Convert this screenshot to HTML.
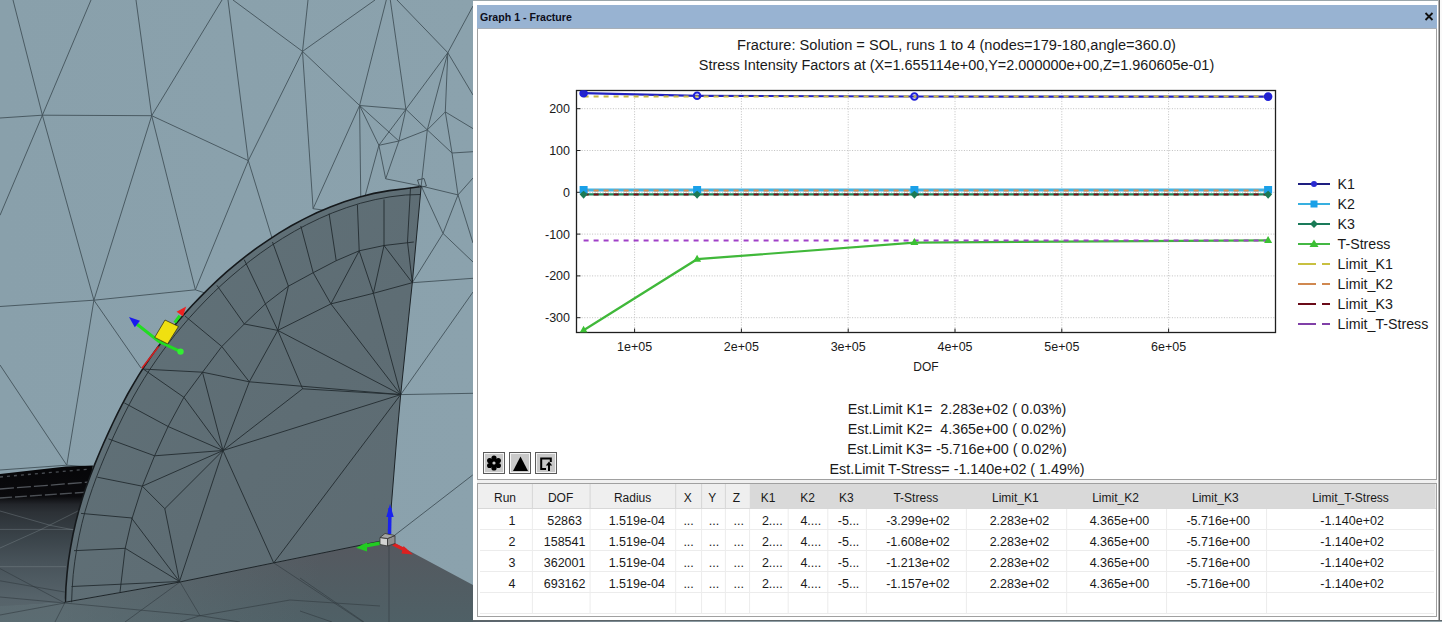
<!DOCTYPE html>
<html><head><meta charset="utf-8">
<style>
html,body{margin:0;padding:0;}
body{width:1442px;height:622px;overflow:hidden;position:relative;background:#8ea3ad;font-family:"Liberation Sans",sans-serif;}
.abs{position:absolute;}
svg{position:absolute;left:0;top:0;}
.t{font-family:"Liberation Sans",sans-serif;fill:#1a1a1a;}
</style></head>
<body>
<svg width="473" height="622" viewBox="0 0 473 622">
<rect x="0" y="0" width="473" height="622" fill="#8ea3ad"/>
<defs>
<linearGradient id="bgg" x1="0" y1="0" x2="1" y2="0"><stop offset="0" stop-color="#89a0ab"/><stop offset="1" stop-color="#8ba2ad"/></linearGradient>
<linearGradient id="flL" x1="0" y1="465" x2="0" y2="622" gradientUnits="userSpaceOnUse">
<stop offset="0" stop-color="#060608"/><stop offset="0.2" stop-color="#0a0a0d"/><stop offset="0.25" stop-color="#22252a"/><stop offset="0.3" stop-color="#2c3136"/><stop offset="0.45" stop-color="#394248"/><stop offset="0.62" stop-color="#48535a"/><stop offset="0.85" stop-color="#56636a"/><stop offset="1" stop-color="#5a676d"/></linearGradient>
<linearGradient id="flR" x1="0" y1="540" x2="0" y2="622" gradientUnits="userSpaceOnUse">
<stop offset="0" stop-color="#56585f"/><stop offset="0.45" stop-color="#525c62"/><stop offset="1" stop-color="#4f6066"/></linearGradient>
<linearGradient id="flR2" x1="60" y1="0" x2="320" y2="0" gradientUnits="userSpaceOnUse">
<stop offset="0" stop-color="#6a7a80" stop-opacity="0.45"/><stop offset="1" stop-color="#6a7a80" stop-opacity="0"/></linearGradient>
<linearGradient id="fan" x1="0" y1="0" x2="1" y2="1"><stop offset="0" stop-color="#617279"/><stop offset="0.6" stop-color="#5e6d74"/><stop offset="1" stop-color="#5d6b72"/></linearGradient>
</defs>
<rect x="0" y="0" width="473" height="622" fill="url(#bgg)"/>
<path d="M13.0 0.0 L42.4 115.2" fill="none" stroke="#43525a" stroke-width="0.9" stroke-opacity="1"/>
<path d="M91.0 0.0 L42.4 115.2" fill="none" stroke="#43525a" stroke-width="0.9" stroke-opacity="1"/>
<path d="M0.0 118.0 L42.4 115.2" fill="none" stroke="#43525a" stroke-width="0.9" stroke-opacity="1"/>
<path d="M42.4 115.2 L151.7 115.7" fill="none" stroke="#43525a" stroke-width="0.9" stroke-opacity="1"/>
<path d="M136.0 0.0 L151.7 115.7" fill="none" stroke="#43525a" stroke-width="0.9" stroke-opacity="1"/>
<path d="M222.0 0.0 L151.7 115.7" fill="none" stroke="#43525a" stroke-width="0.9" stroke-opacity="1"/>
<path d="M228.0 0.0 L248.3 160.6" fill="none" stroke="#43525a" stroke-width="0.9" stroke-opacity="1"/>
<path d="M151.7 115.7 L248.3 160.6" fill="none" stroke="#43525a" stroke-width="0.9" stroke-opacity="1"/>
<path d="M151.7 115.7 L93.9 300.2" fill="none" stroke="#43525a" stroke-width="0.9" stroke-opacity="1"/>
<path d="M42.4 115.2 L93.9 300.2" fill="none" stroke="#43525a" stroke-width="0.9" stroke-opacity="1"/>
<path d="M151.7 115.7 L195.4 289.8" fill="none" stroke="#43525a" stroke-width="0.9" stroke-opacity="1"/>
<path d="M248.3 160.6 L195.4 289.8" fill="none" stroke="#43525a" stroke-width="0.9" stroke-opacity="1"/>
<path d="M42.4 115.2 L0.0 215.3" fill="none" stroke="#43525a" stroke-width="0.9" stroke-opacity="1"/>
<path d="M233.0 0.0 L302.5 51.4" fill="none" stroke="#43525a" stroke-width="0.9" stroke-opacity="1"/>
<path d="M308.0 0.0 L302.5 51.4" fill="none" stroke="#43525a" stroke-width="0.9" stroke-opacity="1"/>
<path d="M375.0 0.0 L302.5 51.4" fill="none" stroke="#43525a" stroke-width="0.9" stroke-opacity="1"/>
<path d="M302.5 51.4 L248.3 160.6" fill="none" stroke="#43525a" stroke-width="0.9" stroke-opacity="1"/>
<path d="M302.5 51.4 L313.1 208.7" fill="none" stroke="#43525a" stroke-width="0.9" stroke-opacity="1"/>
<path d="M302.5 51.4 L359.6 105.5" fill="none" stroke="#43525a" stroke-width="0.9" stroke-opacity="1"/>
<path d="M386.3 0.0 L359.6 105.5" fill="none" stroke="#43525a" stroke-width="0.9" stroke-opacity="1"/>
<path d="M390.3 0.0 L405.9 109.3" fill="none" stroke="#43525a" stroke-width="0.9" stroke-opacity="1"/>
<path d="M397.0 0.0 L447.8 52.7" fill="none" stroke="#43525a" stroke-width="0.9" stroke-opacity="1"/>
<path d="M447.8 52.7 L473.0 6.0" fill="none" stroke="#43525a" stroke-width="0.9" stroke-opacity="1"/>
<path d="M447.8 52.7 L473.0 95.0" fill="none" stroke="#43525a" stroke-width="0.9" stroke-opacity="1"/>
<path d="M447.8 52.7 L405.9 109.3" fill="none" stroke="#43525a" stroke-width="0.9" stroke-opacity="1"/>
<path d="M447.8 52.7 L445.3 111.9" fill="none" stroke="#43525a" stroke-width="0.9" stroke-opacity="1"/>
<path d="M447.8 52.7 L427.3 129.9" fill="none" stroke="#43525a" stroke-width="0.9" stroke-opacity="1"/>
<path d="M359.6 105.5 L405.9 109.3" fill="none" stroke="#43525a" stroke-width="0.9" stroke-opacity="1"/>
<path d="M359.6 105.5 L398.9 141.0" fill="none" stroke="#43525a" stroke-width="0.9" stroke-opacity="1"/>
<path d="M405.9 109.3 L398.9 141.0" fill="none" stroke="#43525a" stroke-width="0.9" stroke-opacity="1"/>
<path d="M405.9 109.3 L427.3 129.9" fill="none" stroke="#43525a" stroke-width="0.9" stroke-opacity="1"/>
<path d="M398.9 141.0 L427.3 129.9" fill="none" stroke="#43525a" stroke-width="0.9" stroke-opacity="1"/>
<path d="M427.3 129.9 L445.3 111.9" fill="none" stroke="#43525a" stroke-width="0.9" stroke-opacity="1"/>
<path d="M445.3 111.9 L473.0 128.6" fill="none" stroke="#43525a" stroke-width="0.9" stroke-opacity="1"/>
<path d="M398.9 141.0 L378.9 145.3" fill="none" stroke="#43525a" stroke-width="0.9" stroke-opacity="1"/>
<path d="M445.3 111.9 L452.0 153.0" fill="none" stroke="#43525a" stroke-width="0.9" stroke-opacity="1"/>
<path d="M452.0 153.0 L473.0 151.7" fill="none" stroke="#43525a" stroke-width="0.9" stroke-opacity="1"/>
<path d="M427.3 129.9 L452.0 153.0" fill="none" stroke="#43525a" stroke-width="0.9" stroke-opacity="1"/>
<path d="M359.6 105.5 L378.9 145.3" fill="none" stroke="#43525a" stroke-width="0.9" stroke-opacity="1"/>
<path d="M359.6 105.5 L360.8 200.0" fill="none" stroke="#43525a" stroke-width="0.9" stroke-opacity="1"/>
<path d="M359.6 105.5 L313.1 208.7" fill="none" stroke="#43525a" stroke-width="0.9" stroke-opacity="1"/>
<path d="M405.9 109.3 L378.9 145.3" fill="none" stroke="#43525a" stroke-width="0.9" stroke-opacity="1"/>
<path d="M378.9 145.3 L385.7 178.8" fill="none" stroke="#43525a" stroke-width="0.9" stroke-opacity="1"/>
<path d="M398.9 141.0 L385.7 178.8" fill="none" stroke="#43525a" stroke-width="0.9" stroke-opacity="1"/>
<path d="M385.7 178.8 L421.2 186.0" fill="none" stroke="#43525a" stroke-width="0.9" stroke-opacity="1"/>
<path d="M378.9 145.3 L364.8 197.0" fill="none" stroke="#43525a" stroke-width="0.9" stroke-opacity="1"/>
<path d="M427.3 129.9 L421.2 186.0" fill="none" stroke="#43525a" stroke-width="0.9" stroke-opacity="1"/>
<path d="M421.2 186.0 L458.0 194.9" fill="none" stroke="#43525a" stroke-width="0.9" stroke-opacity="1"/>
<path d="M452.0 153.0 L458.0 194.9" fill="none" stroke="#43525a" stroke-width="0.9" stroke-opacity="1"/>
<path d="M458.0 194.9 L473.0 178.0" fill="none" stroke="#43525a" stroke-width="0.9" stroke-opacity="1"/>
<path d="M458.0 194.9 L443.0 233.4" fill="none" stroke="#43525a" stroke-width="0.9" stroke-opacity="1"/>
<path d="M458.0 194.9 L473.0 243.0" fill="none" stroke="#43525a" stroke-width="0.9" stroke-opacity="1"/>
<path d="M421.2 186.0 L443.0 233.4" fill="none" stroke="#43525a" stroke-width="0.9" stroke-opacity="1"/>
<path d="M443.0 233.4 L412.3 282.7" fill="none" stroke="#43525a" stroke-width="0.9" stroke-opacity="1"/>
<path d="M443.0 233.4 L473.0 262.0" fill="none" stroke="#43525a" stroke-width="0.9" stroke-opacity="1"/>
<path d="M412.3 282.7 L473.0 278.3" fill="none" stroke="#43525a" stroke-width="0.9" stroke-opacity="1"/>
<path d="M248.3 160.6 L272.0 238.0" fill="none" stroke="#43525a" stroke-width="0.9" stroke-opacity="1"/>
<path d="M313.1 208.7 L330.0 211.0" fill="none" stroke="#43525a" stroke-width="0.9" stroke-opacity="1"/>
<path d="M0.0 306.5 L93.9 300.2" fill="none" stroke="#43525a" stroke-width="0.9" stroke-opacity="1"/>
<path d="M93.9 300.2 L195.4 289.8" fill="none" stroke="#43525a" stroke-width="0.9" stroke-opacity="1"/>
<path d="M195.4 289.8 L205.0 293.0" fill="none" stroke="#43525a" stroke-width="0.9" stroke-opacity="1"/>
<path d="M93.9 300.2 L141.0 368.0" fill="none" stroke="#43525a" stroke-width="0.9" stroke-opacity="1"/>
<path d="M0.0 365.0 L66.8 465.2" fill="none" stroke="#43525a" stroke-width="0.9" stroke-opacity="1"/>
<path d="M93.9 300.2 L66.8 465.2" fill="none" stroke="#43525a" stroke-width="0.9" stroke-opacity="1"/>
<path d="M66.8 465.2 L0.0 470.0" fill="none" stroke="#43525a" stroke-width="0.9" stroke-opacity="1"/>
<path d="M66.8 465.2 L92.0 467.0" fill="none" stroke="#43525a" stroke-width="0.9" stroke-opacity="1"/>
<path d="M400.7 394.6 L473.0 393.3" fill="none" stroke="#43525a" stroke-width="0.9" stroke-opacity="1"/>
<path d="M400.7 394.6 L473.0 292.0" fill="none" stroke="#43525a" stroke-width="0.9" stroke-opacity="1"/>
<path d="M395.0 535.0 L472.7 475.0" fill="none" stroke="#43525a" stroke-width="0.9" stroke-opacity="1"/>
<path d="M0 474 L66 466.5 L93 465.5 L80 530 L64 602.4 L0 607 Z" fill="url(#flL)"/>
<path d="M0 477 L90 469" stroke="#8c949c" stroke-width="1.3" stroke-dasharray="3,4" stroke-opacity="0.5"/>
<path d="M0 489 L90 482" stroke="#8c949c" stroke-width="1.3" stroke-dasharray="14,3" stroke-opacity="0.55"/>
<path d="M0 498 L90 492" stroke="#8c949c" stroke-width="1.3" stroke-dasharray="12,3" stroke-opacity="0.5"/>
<path d="M0 511 L51 525.5 L90 533" fill="none" stroke="#8a949a" stroke-width="1" stroke-opacity="0.35"/>
<path d="M0 529.4 L80 529.4" fill="none" stroke="#8a949a" stroke-width="1" stroke-opacity="0.35"/>
<path d="M0 566.7 L66 566.7" fill="none" stroke="#8a949a" stroke-width="1" stroke-opacity="0.35"/>
<path d="M0 548 L40 530 L90 505" fill="none" stroke="#8a949a" stroke-width="1" stroke-opacity="0.35"/>
<path d="M64 602.4 L180 582 L273.7 562.9 L388 539.5 L473 585 L473 622 L0 622 L0 606 Z" fill="url(#flR)"/>
<path d="M64 602.4 L180 582 L273.7 562.9 L388 539.5 L473 585 L473 622 L0 622 L0 606 Z" fill="url(#flR2)"/>
<path d="M273.7 562.9 L363.0 622.0" fill="none" stroke="#2e383d" stroke-width="0.8" stroke-opacity="0.7"/>
<path d="M389.0 540.0 L389.0 622.0" fill="none" stroke="#2e383d" stroke-width="0.8" stroke-opacity="0.7"/>
<path d="M300.0 578.0 L364.0 622.0" fill="none" stroke="#2e383d" stroke-width="0.8" stroke-opacity="0.7"/>
<path d="M300.0 611.0 L332.0 622.0" fill="none" stroke="#2e383d" stroke-width="0.8" stroke-opacity="0.7"/>
<path d="M0.0 568.6 L64.7 603.0" fill="none" stroke="#2e383d" stroke-width="0.8" stroke-opacity="0.7"/>
<path d="M0.0 580.8 L64.7 592.0" fill="none" stroke="#2e383d" stroke-width="0.8" stroke-opacity="0.7"/>
<path d="M0.0 597.0 L64.7 603.0" fill="none" stroke="#2e383d" stroke-width="0.8" stroke-opacity="0.7"/>
<path d="M180.0 582.0 L125.0 622.0" fill="none" stroke="#2e383d" stroke-width="0.8" stroke-opacity="0.7"/>
<path d="M180.0 582.0 L200.0 615.7" fill="none" stroke="#2e383d" stroke-width="0.8" stroke-opacity="0.7"/>
<path d="M200.0 615.7 L240.0 622.0" fill="none" stroke="#2e383d" stroke-width="0.8" stroke-opacity="0.7"/>
<path d="M64.7 603.0 L200.0 615.7" fill="none" stroke="#2e383d" stroke-width="0.8" stroke-opacity="0.7"/>
<path d="M64.7 603.0 L55.0 622.0" fill="none" stroke="#2e383d" stroke-width="0.8" stroke-opacity="0.7"/>
<path d="M200.0 615.7 L290.0 600.0" fill="none" stroke="#2e383d" stroke-width="0.8" stroke-opacity="0.7"/>
<path d="M290.0 600.0 L380.0 606.0" fill="none" stroke="#2e383d" stroke-width="0.8" stroke-opacity="0.7"/>
<path d="M200.0 615.7 L180.0 622.0" fill="none" stroke="#2e383d" stroke-width="0.8" stroke-opacity="0.7"/>
<path d="M64.7 603.0 L0.0 615.0" fill="none" stroke="#2e383d" stroke-width="0.8" stroke-opacity="0.7"/>
<path d="M65.4 602.0 L65.9 587.8 L67.0 574.0 L68.5 560.5 L70.6 547.3 L73.0 534.5 L75.8 522.1 L79.0 509.9 L82.5 498.1 L86.3 486.6 L90.4 475.4 L94.7 464.4 L99.1 453.7 L103.6 443.3 L108.2 433.1 L112.9 423.0 L117.7 413.2 L122.6 403.5 L127.7 394.0 L133.1 384.6 L138.6 375.4 L144.4 366.3 L150.5 357.3 L156.8 348.4 L163.4 339.5 L170.3 330.8 L177.4 322.1 L184.8 313.5 L192.5 305.0 L200.6 296.6 L209.0 288.2 L217.8 279.9 L226.9 271.7 L236.5 263.6 L246.5 255.7 L256.9 247.9 L267.9 240.3 L279.3 232.9 L291.3 225.8 L303.7 219.1 L316.7 212.8 L330.3 207.0 L344.3 201.7 L358.8 197.2 L373.8 193.4 L389.2 190.6 L404.8 188.7 L421.2 186.5 L412.3 282.7 L408.4 320.0 L400.7 394.6 L396.6 440.0 L388.6 539.5 L273.7 562.9 L180.0 582.0 Z" fill="url(#fan)"/>
<path d="M71.6 602.2 L72.2 588.2 L73.2 574.6 L74.8 561.3 L76.8 548.4 L79.2 535.8 L81.9 523.6 L85.0 511.6 L88.5 500.0 L92.3 488.7 L96.3 477.6 L100.5 466.8 L104.9 456.2 L109.4 445.8 L113.9 435.7 L118.6 425.7 L123.3 416.0 L128.2 406.4 L133.2 397.1 L138.5 387.8 L144.0 378.7 L149.7 369.7 L155.7 360.9 L161.9 352.1 L168.4 343.4 L175.2 334.7 L182.2 326.2 L189.5 317.7 L197.2 309.3 L205.1 301.0 L213.4 292.7 L222.0 284.5 L231.0 276.5 L240.5 268.5 L250.3 260.7 L260.6 253.0 L271.4 245.5 L282.6 238.3 L294.4 231.3 L306.6 224.7 L319.4 218.5 L332.6 212.8 L346.4 207.7 L360.6 203.2 L375.2 199.6 L390.1 196.8 L405.6 195.0 L420.2 194.5" fill="none" stroke="#222b30" stroke-width="0.9" stroke-opacity="1"/>
<path d="M413.8 242.0 L384.0 245.5 L359.2 250.8 L336.2 260.7 L313.2 272.7 L288.4 286.2 L265.4 303.9 L244.3 324.0 L221.8 346.5 L202.5 372.2 L183.9 397.3 L168.1 426.5 L154.6 455.8 L142.3 486.2 L132.2 518.0 L125.2 548.3 L120.0 592.0" fill="none" stroke="#222b30" stroke-width="0.9" stroke-opacity="1"/>
<path d="M244.2 259.6 L265.4 303.9" fill="none" stroke="#222b30" stroke-width="0.9" stroke-opacity="1"/>
<path d="M272.5 242.0 L288.4 286.2" fill="none" stroke="#222b30" stroke-width="0.9" stroke-opacity="1"/>
<path d="M300.8 226.0 L313.2 272.7" fill="none" stroke="#222b30" stroke-width="0.9" stroke-opacity="1"/>
<path d="M329.1 213.6 L336.2 260.7" fill="none" stroke="#222b30" stroke-width="0.9" stroke-opacity="1"/>
<path d="M357.4 204.8 L359.2 250.8" fill="none" stroke="#222b30" stroke-width="0.9" stroke-opacity="1"/>
<path d="M384.0 199.5 L384.0 245.5" fill="none" stroke="#222b30" stroke-width="0.9" stroke-opacity="1"/>
<path d="M410.5 187.5 L407.5 242.0" fill="none" stroke="#222b30" stroke-width="0.9" stroke-opacity="1"/>
<path d="M407.5 242.0 L412.3 282.7" fill="none" stroke="#222b30" stroke-width="0.9" stroke-opacity="1"/>
<path d="M217.0 285.4 L244.3 324.0" fill="none" stroke="#222b30" stroke-width="0.9" stroke-opacity="1"/>
<path d="M185.0 316.0 L221.8 346.5" fill="none" stroke="#222b30" stroke-width="0.9" stroke-opacity="1"/>
<path d="M143.4 369.1 L202.5 372.2" fill="none" stroke="#222b30" stroke-width="0.9" stroke-opacity="1"/>
<path d="M143.4 369.1 L183.9 397.3" fill="none" stroke="#222b30" stroke-width="0.9" stroke-opacity="1"/>
<path d="M124.3 402.9 L168.1 426.5" fill="none" stroke="#222b30" stroke-width="0.9" stroke-opacity="1"/>
<path d="M108.5 438.9 L154.6 455.8" fill="none" stroke="#222b30" stroke-width="0.9" stroke-opacity="1"/>
<path d="M97.3 477.2 L142.3 486.2" fill="none" stroke="#222b30" stroke-width="0.9" stroke-opacity="1"/>
<path d="M81.0 513.4 L132.2 518.0" fill="none" stroke="#222b30" stroke-width="0.9" stroke-opacity="1"/>
<path d="M74.0 550.7 L125.2 548.3" fill="none" stroke="#222b30" stroke-width="0.9" stroke-opacity="1"/>
<path d="M71.6 586.5 L179.5 581.5" fill="none" stroke="#222b30" stroke-width="0.9" stroke-opacity="1"/>
<path d="M412.3 282.7 L373.4 293.3" fill="none" stroke="#222b30" stroke-width="0.9" stroke-opacity="1"/>
<path d="M373.4 293.3 L330.9 303.9" fill="none" stroke="#222b30" stroke-width="0.9" stroke-opacity="1"/>
<path d="M330.9 303.9 L277.8 330.4" fill="none" stroke="#222b30" stroke-width="0.9" stroke-opacity="1"/>
<path d="M277.8 330.4 L244.3 324.0" fill="none" stroke="#222b30" stroke-width="0.9" stroke-opacity="1"/>
<path d="M384.0 245.5 L373.4 293.3" fill="none" stroke="#222b30" stroke-width="0.9" stroke-opacity="1"/>
<path d="M384.0 245.5 L412.3 282.7" fill="none" stroke="#222b30" stroke-width="0.9" stroke-opacity="1"/>
<path d="M359.2 250.8 L373.4 293.3" fill="none" stroke="#222b30" stroke-width="0.9" stroke-opacity="1"/>
<path d="M359.2 250.8 L330.9 303.9" fill="none" stroke="#222b30" stroke-width="0.9" stroke-opacity="1"/>
<path d="M313.2 272.7 L330.9 303.9" fill="none" stroke="#222b30" stroke-width="0.9" stroke-opacity="1"/>
<path d="M288.4 286.2 L277.8 330.4" fill="none" stroke="#222b30" stroke-width="0.9" stroke-opacity="1"/>
<path d="M265.4 303.9 L277.8 330.4" fill="none" stroke="#222b30" stroke-width="0.9" stroke-opacity="1"/>
<path d="M277.8 330.4 L400.7 394.6" fill="none" stroke="#222b30" stroke-width="0.9" stroke-opacity="1"/>
<path d="M330.9 303.9 L400.7 394.6" fill="none" stroke="#222b30" stroke-width="0.9" stroke-opacity="1"/>
<path d="M373.4 293.3 L400.7 394.6" fill="none" stroke="#222b30" stroke-width="0.9" stroke-opacity="1"/>
<path d="M277.8 330.4 L249.3 381.8" fill="none" stroke="#222b30" stroke-width="0.9" stroke-opacity="1"/>
<path d="M277.8 330.4 L302.6 388.8" fill="none" stroke="#222b30" stroke-width="0.9" stroke-opacity="1"/>
<path d="M221.8 346.5 L249.3 381.8" fill="none" stroke="#222b30" stroke-width="0.9" stroke-opacity="1"/>
<path d="M202.5 372.2 L249.3 381.8" fill="none" stroke="#222b30" stroke-width="0.9" stroke-opacity="1"/>
<path d="M249.3 381.8 L400.7 394.6" fill="none" stroke="#222b30" stroke-width="0.9" stroke-opacity="1"/>
<path d="M302.6 388.8 L400.7 394.6" fill="none" stroke="#222b30" stroke-width="0.9" stroke-opacity="1"/>
<path d="M202.5 372.2 L223.0 450.5" fill="none" stroke="#222b30" stroke-width="0.9" stroke-opacity="1"/>
<path d="M183.9 397.3 L223.0 450.5" fill="none" stroke="#222b30" stroke-width="0.9" stroke-opacity="1"/>
<path d="M168.1 426.5 L223.0 450.5" fill="none" stroke="#222b30" stroke-width="0.9" stroke-opacity="1"/>
<path d="M249.3 381.8 L223.0 450.5" fill="none" stroke="#222b30" stroke-width="0.9" stroke-opacity="1"/>
<path d="M142.3 486.2 L223.0 450.5" fill="none" stroke="#222b30" stroke-width="0.9" stroke-opacity="1"/>
<path d="M164.8 508.7 L223.0 450.5" fill="none" stroke="#222b30" stroke-width="0.9" stroke-opacity="1"/>
<path d="M179.5 581.5 L223.0 450.5" fill="none" stroke="#222b30" stroke-width="0.9" stroke-opacity="1"/>
<path d="M223.0 450.5 L400.7 394.6" fill="none" stroke="#222b30" stroke-width="0.9" stroke-opacity="1"/>
<path d="M302.6 388.8 L223.0 450.5" fill="none" stroke="#222b30" stroke-width="0.9" stroke-opacity="1"/>
<path d="M400.7 394.6 L273.7 562.9" fill="none" stroke="#222b30" stroke-width="0.9" stroke-opacity="1"/>
<path d="M223.0 450.5 L273.7 562.9" fill="none" stroke="#222b30" stroke-width="0.9" stroke-opacity="1"/>
<path d="M142.3 486.2 L164.8 508.7" fill="none" stroke="#222b30" stroke-width="0.9" stroke-opacity="1"/>
<path d="M164.8 508.7 L179.5 581.5" fill="none" stroke="#222b30" stroke-width="0.9" stroke-opacity="1"/>
<path d="M154.6 455.8 L223.0 450.5" fill="none" stroke="#222b30" stroke-width="0.9" stroke-opacity="1"/>
<path d="M131.5 518.0 L179.5 581.5" fill="none" stroke="#222b30" stroke-width="0.9" stroke-opacity="1"/>
<path d="M179.5 581.5 L125.2 548.3" fill="none" stroke="#222b30" stroke-width="0.9" stroke-opacity="1"/>
<path d="M65.4 602.0 L65.9 587.8 L67.0 574.0 L68.5 560.5 L70.6 547.3 L73.0 534.5 L75.8 522.1 L79.0 509.9 L82.5 498.1 L86.3 486.6 L90.4 475.4 L94.7 464.4 L99.1 453.7 L103.6 443.3 L108.2 433.1 L112.9 423.0 L117.7 413.2 L122.6 403.5 L127.7 394.0 L133.1 384.6 L138.6 375.4 L144.4 366.3 L150.5 357.3 L156.8 348.4 L163.4 339.5 L170.3 330.8 L177.4 322.1 L184.8 313.5 L192.5 305.0 L200.6 296.6 L209.0 288.2 L217.8 279.9 L226.9 271.7 L236.5 263.6 L246.5 255.7 L256.9 247.9 L267.9 240.3 L279.3 232.9 L291.3 225.8 L303.7 219.1 L316.7 212.8 L330.3 207.0 L344.3 201.7 L358.8 197.2 L373.8 193.4 L389.2 190.6 L404.8 188.7 L421.2 186.5" fill="none" stroke="#15191c" stroke-width="1.6" stroke-opacity="1"/>
<path d="M421.2 186.0 L412.3 282.7 L408.4 320.0 L400.7 394.6 L396.6 440.0 L388.6 539.5" fill="none" stroke="#1d2428" stroke-width="1.0" stroke-opacity="1"/>
<path d="M388.6 539.5 L273.7 562.9 L180.0 582.0 L64.2 602.4" fill="none" stroke="#1d2428" stroke-width="1.0" stroke-opacity="1"/>
<path d="M158.6 346.4 L141.9 368.3" fill="none" stroke="#d02020" stroke-width="1.6" stroke-opacity="1"/>
<path d="M417.5 180 L424 178.5 L426.4 186 L420 187.5 Z" fill="none" stroke="#3a474e" stroke-width="0.9"/>
<path d="M136.7 324 L158.6 341.3 L180.5 351.6" fill="none" stroke="#22dd22" stroke-width="3"/>
<path d="M129 316.9 L140 320.7 L134.8 327.2 Z" fill="#1a1aee"/>
<circle cx="180.5" cy="351.6" r="3.2" fill="#33ee33"/>
<path d="M174.7 322.7 L179.8 315.6" stroke="#22dd22" stroke-width="3"/>
<path d="M176.6 311.7 L186.2 306.6 L183 316.2 Z" fill="#ee2222"/>
<path d="M154.7 337.4 L165 320 L178.5 326.5 L167.6 343.9 Z" fill="#f0e010" stroke="#3a3a10" stroke-width="0.8"/>
<path d="M389.5 534 L390 508" stroke="#1a22ee" stroke-width="3.5"/>
<path d="M386.3 517 L390 504 L393.7 517 Z" fill="#1a22ee"/>
<path d="M381 543 L362 546.5" stroke="#22cc22" stroke-width="3.5"/>
<path d="M367 542.5 L356 547.8 L367 551.5 Z" fill="#22cc22"/>
<path d="M393 544 L406 550.5" stroke="#dd2020" stroke-width="3.5"/>
<path d="M403.5 546 L413 554.5 L401.5 553.5 Z" fill="#dd2020"/>
<path d="M380 537.5 L387.5 538.5 L387.5 546 L380 544.5 Z" fill="#d2d2d2" stroke="#333" stroke-width="0.8"/>
<path d="M387.5 538.5 L395 535.5 L395 543.5 L387.5 546 Z" fill="#8e8e8e" stroke="#333" stroke-width="0.8"/>
<path d="M380 537.5 L385 533.5 L395 535.5 L387.5 538.5 Z" fill="#a4a4a4" stroke="#333" stroke-width="0.8"/>
</svg>
<div class="abs" style="left:473px;top:0px;width:969px;height:622px;background:#fff;"></div>
<div class="abs" style="left:473px;top:0px;width:969px;height:1px;background:#9aa6ab;"></div>
<div class="abs" style="left:1438px;top:0px;width:1px;height:622px;background:#b0b0b0;"></div><div class="abs" style="left:1439px;top:0px;width:1px;height:622px;background:#686868;"></div><div class="abs" style="left:1440px;top:0px;width:2px;height:622px;background:#fafafa;"></div>
<div class="abs" style="left:473px;top:620px;width:969px;height:1px;background:#5c6569;"></div><div class="abs" style="left:473px;top:621px;width:969px;height:1px;background:linear-gradient(90deg,#56616a 0px,#8a9aa2 200px,#93a3aa 400px);"></div>
<div class="abs" style="left:477px;top:5px;width:960px;height:23px;background:#98b3d2;"></div><div class="abs" style="left:477px;top:28px;width:960px;height:1px;background:#a7afb8;"></div>
<div class="abs" style="left:480px;top:10px;font:bold 10.6px 'Liberation Sans',sans-serif;color:#0d0d1a;line-height:14px;white-space:nowrap;">Graph 1 - Fracture</div>
<div class="abs" style="left:477px;top:29px;width:958px;height:450px;border-left:1px solid #a0a0a0;border-right:1px solid #a0a0a0;border-bottom:1px solid #a0a0a0;"></div>
<div class="abs" style="left:477px;top:480px;width:960px;height:3px;background:#f0f0f0;"></div>
<div class="abs" style="left:477px;top:483px;width:958px;height:132px;border:1px solid #a0a0a0;background:#fff;"></div>
<svg width="1442" height="622">
<path d="M1425.5 13 L1432.5 20 M1432.5 13 L1425.5 20" stroke="#111" stroke-width="1.8"/>
<line x1="576.5" y1="108.7" x2="1275.5" y2="108.7" stroke="#c0c0c0" stroke-width="1" stroke-dasharray="1,1.6"/>
<line x1="576.5" y1="108.7" x2="580.5" y2="108.7" stroke="#222" stroke-width="1"/>
<text x="570" y="113.2" text-anchor="end" font-size="12.5" class="t">200</text>
<line x1="576.5" y1="150.5" x2="1275.5" y2="150.5" stroke="#c0c0c0" stroke-width="1" stroke-dasharray="1,1.6"/>
<line x1="576.5" y1="150.5" x2="580.5" y2="150.5" stroke="#222" stroke-width="1"/>
<text x="570" y="155.0" text-anchor="end" font-size="12.5" class="t">100</text>
<line x1="576.5" y1="192.3" x2="1275.5" y2="192.3" stroke="#c0c0c0" stroke-width="1" stroke-dasharray="1,1.6"/>
<line x1="576.5" y1="192.3" x2="580.5" y2="192.3" stroke="#222" stroke-width="1"/>
<text x="570" y="196.8" text-anchor="end" font-size="12.5" class="t">0</text>
<line x1="576.5" y1="234.1" x2="1275.5" y2="234.1" stroke="#c0c0c0" stroke-width="1" stroke-dasharray="1,1.6"/>
<line x1="576.5" y1="234.1" x2="580.5" y2="234.1" stroke="#222" stroke-width="1"/>
<text x="570" y="238.6" text-anchor="end" font-size="12.5" class="t">-100</text>
<line x1="576.5" y1="275.9" x2="1275.5" y2="275.9" stroke="#c0c0c0" stroke-width="1" stroke-dasharray="1,1.6"/>
<line x1="576.5" y1="275.9" x2="580.5" y2="275.9" stroke="#222" stroke-width="1"/>
<text x="570" y="280.4" text-anchor="end" font-size="12.5" class="t">-200</text>
<line x1="576.5" y1="317.7" x2="1275.5" y2="317.7" stroke="#c0c0c0" stroke-width="1" stroke-dasharray="1,1.6"/>
<line x1="576.5" y1="317.7" x2="580.5" y2="317.7" stroke="#222" stroke-width="1"/>
<text x="570" y="322.2" text-anchor="end" font-size="12.5" class="t">-300</text>
<line x1="634.6" y1="90.5" x2="634.6" y2="332.5" stroke="#c0c0c0" stroke-width="1" stroke-dasharray="1,1.6"/>
<line x1="634.6" y1="328.5" x2="634.6" y2="332.5" stroke="#222" stroke-width="1"/>
<text x="634.6" y="351" text-anchor="middle" font-size="12.5" class="t">1e+05</text>
<line x1="741.4" y1="90.5" x2="741.4" y2="332.5" stroke="#c0c0c0" stroke-width="1" stroke-dasharray="1,1.6"/>
<line x1="741.4" y1="328.5" x2="741.4" y2="332.5" stroke="#222" stroke-width="1"/>
<text x="741.4" y="351" text-anchor="middle" font-size="12.5" class="t">2e+05</text>
<line x1="848.2" y1="90.5" x2="848.2" y2="332.5" stroke="#c0c0c0" stroke-width="1" stroke-dasharray="1,1.6"/>
<line x1="848.2" y1="328.5" x2="848.2" y2="332.5" stroke="#222" stroke-width="1"/>
<text x="848.2" y="351" text-anchor="middle" font-size="12.5" class="t">3e+05</text>
<line x1="955.0" y1="90.5" x2="955.0" y2="332.5" stroke="#c0c0c0" stroke-width="1" stroke-dasharray="1,1.6"/>
<line x1="955.0" y1="328.5" x2="955.0" y2="332.5" stroke="#222" stroke-width="1"/>
<text x="955.0" y="351" text-anchor="middle" font-size="12.5" class="t">4e+05</text>
<line x1="1061.8" y1="90.5" x2="1061.8" y2="332.5" stroke="#c0c0c0" stroke-width="1" stroke-dasharray="1,1.6"/>
<line x1="1061.8" y1="328.5" x2="1061.8" y2="332.5" stroke="#222" stroke-width="1"/>
<text x="1061.8" y="351" text-anchor="middle" font-size="12.5" class="t">5e+05</text>
<line x1="1168.6" y1="90.5" x2="1168.6" y2="332.5" stroke="#c0c0c0" stroke-width="1" stroke-dasharray="1,1.6"/>
<line x1="1168.6" y1="328.5" x2="1168.6" y2="332.5" stroke="#222" stroke-width="1"/>
<text x="1168.6" y="351" text-anchor="middle" font-size="12.5" class="t">6e+05</text>
<rect x="576.5" y="90.5" width="699.0" height="242.0" fill="none" stroke="#1e1e1e" stroke-width="1.3"/>
<text x="926" y="371" text-anchor="middle" font-size="12" class="t">DOF</text>
<text x="956.5" y="50" text-anchor="middle" font-size="14.62" class="t">Fracture: Solution = SOL, runs 1 to 4 (nodes=179-180,angle=360.0)</text>
<text x="956.5" y="70" text-anchor="middle" font-size="14.45" class="t">Stress Intensity Factors at (X=1.655114e+00,Y=2.000000e+00,Z=1.960605e-01)</text>
<defs><clipPath id="pc"><rect x="576.5" y="90.5" width="699.0" height="242.0"/></clipPath></defs>
<g clip-path="url(#pc)">
<polyline points="583.6,190.0 697.1,190.0 914.4,190.0 1268.1,190.0" fill="none" stroke="#3fb4e6" stroke-width="2.8"/>
<polyline points="583.6,194.3 697.1,194.3 914.4,194.3 1268.1,194.3" fill="none" stroke="#1f8a5e" stroke-width="2.2"/>
<line x1="583.6" y1="190.6" x2="1268.1" y2="190.6" stroke="#e48a4a" stroke-width="2" stroke-dasharray="5,5"/>
<line x1="583.6" y1="194.5" x2="1268.1" y2="194.5" stroke="#7a0a14" stroke-width="2" stroke-dasharray="5,5"/>
<polyline points="583.6,330.2 697.1,259.2 914.4,242.6 1268.1,240.4" fill="none" stroke="#40b83a" stroke-width="2.2"/>
<line x1="583.6" y1="240.4" x2="1268.1" y2="240.4" stroke="#a040c8" stroke-width="2" stroke-dasharray="5,5"/>
<polyline points="583.6,93.2 697.1,95.8 914.4,96.5 1268.1,96.6" fill="none" stroke="#2222c0" stroke-width="2.2"/>
<line x1="583.6" y1="96.6" x2="1268.1" y2="96.6" stroke="#c8b840" stroke-width="2" stroke-dasharray="5,5"/>
<circle cx="583.6" cy="93.2" r="3.3" fill="#2424c8" stroke="#2020d8" stroke-width="2"/>
<circle cx="697.1" cy="95.8" r="3.3" fill="none" stroke="#2020d8" stroke-width="2"/>
<circle cx="914.4" cy="96.5" r="3.3" fill="none" stroke="#2020d8" stroke-width="2"/>
<circle cx="1268.1" cy="96.6" r="3.3" fill="#2424c8" stroke="#2020d8" stroke-width="2"/>
<rect x="579.6" y="186.0" width="8" height="7.5" fill="#1aa0e8"/>
<rect x="693.1" y="186.0" width="8" height="7.5" fill="#1aa0e8"/>
<rect x="910.4" y="186.0" width="8" height="7.5" fill="#1aa0e8"/>
<rect x="1264.1" y="186.0" width="8" height="7.5" fill="#1aa0e8"/>
<path d="M583.6 190.8 L587.6 194.3 L583.6 198.8 L579.6 194.3 Z" fill="#1a7a55"/>
<path d="M697.1 190.8 L701.1 194.3 L697.1 198.8 L693.1 194.3 Z" fill="#1a7a55"/>
<path d="M914.4 190.8 L918.4 194.3 L914.4 198.8 L910.4 194.3 Z" fill="#1a7a55"/>
<path d="M1268.1 190.8 L1272.1 194.3 L1268.1 198.8 L1264.1 194.3 Z" fill="#1a7a55"/>
<path d="M583.6 325.7 L587.6 332.7 L579.6 332.7 Z" fill="#3cc034"/>
<path d="M697.1 254.7 L701.1 261.7 L693.1 261.7 Z" fill="#3cc034"/>
<path d="M914.4 238.1 L918.4 245.1 L910.4 245.1 Z" fill="#3cc034"/>
<path d="M1268.1 235.9 L1272.1 242.9 L1264.1 242.9 Z" fill="#3cc034"/>
</g>
<line x1="1298" y1="184" x2="1330" y2="184" stroke="#1e1e80" stroke-width="2"/>
<circle cx="1314" cy="184" r="3" fill="#2a2ad0"/>
<text x="1337.6" y="189" font-size="14.2" class="t">K1</text>
<line x1="1298" y1="204" x2="1330" y2="204" stroke="#38b0e0" stroke-width="2"/>
<rect x="1310.5" y="200.5" width="7" height="7" fill="#1aa0e8"/>
<text x="1337.6" y="209" font-size="14.2" class="t">K2</text>
<line x1="1298" y1="224" x2="1330" y2="224" stroke="#1a7a5a" stroke-width="2"/>
<path d="M1314 220 L1318 224 L1314 228 L1310 224 Z" fill="#1a7a55"/>
<text x="1337.6" y="229" font-size="14.2" class="t">K3</text>
<line x1="1298" y1="244" x2="1330" y2="244" stroke="#44b844" stroke-width="2"/>
<path d="M1314 239.5 L1318.5 247 L1309.5 247 Z" fill="#3cc034"/>
<text x="1337.6" y="249" font-size="14.2" class="t">T-Stress</text>
<line x1="1298" y1="264" x2="1316" y2="264" stroke="#c8c040" stroke-width="2"/>
<line x1="1322" y1="264" x2="1330" y2="264" stroke="#c8c040" stroke-width="2"/>
<text x="1337.6" y="269" font-size="14.2" class="t">Limit_K1</text>
<line x1="1298" y1="284" x2="1316" y2="284" stroke="#d08850" stroke-width="2"/>
<line x1="1322" y1="284" x2="1330" y2="284" stroke="#d08850" stroke-width="2"/>
<text x="1337.6" y="289" font-size="14.2" class="t">Limit_K2</text>
<line x1="1298" y1="304" x2="1316" y2="304" stroke="#6a0a18" stroke-width="2"/>
<line x1="1322" y1="304" x2="1330" y2="304" stroke="#6a0a18" stroke-width="2"/>
<text x="1337.6" y="309" font-size="14.2" class="t">Limit_K3</text>
<line x1="1298" y1="324" x2="1316" y2="324" stroke="#8040a8" stroke-width="2"/>
<line x1="1322" y1="324" x2="1330" y2="324" stroke="#8040a8" stroke-width="2"/>
<text x="1337.6" y="329" font-size="14.2" class="t">Limit_T-Stress</text>
<text x="957" y="414" text-anchor="middle" font-size="14.3" class="t" xml:space="preserve">Est.Limit K1=&#160; 2.283e+02 ( 0.03%)</text>
<text x="957" y="434" text-anchor="middle" font-size="14.3" class="t" xml:space="preserve">Est.Limit K2=&#160; 4.365e+00 ( 0.02%)</text>
<text x="957" y="454" text-anchor="middle" font-size="14.3" class="t" xml:space="preserve">Est.Limit K3= -5.716e+00 ( 0.02%)</text>
<text x="957" y="474" text-anchor="middle" font-size="14.3" class="t" xml:space="preserve">Est.Limit T-Stress= -1.140e+02 ( 1.49%)</text>
<rect x="483.5" y="452.5" width="21" height="21" fill="#c8c8c8" stroke="#5a5a5a" stroke-width="1"/>
<rect x="484.5" y="453.5" width="19" height="19" fill="none" stroke="#f4f4f4" stroke-width="1"/>
<rect x="509.5" y="452.5" width="21" height="21" fill="#c8c8c8" stroke="#5a5a5a" stroke-width="1"/>
<rect x="510.5" y="453.5" width="19" height="19" fill="none" stroke="#f4f4f4" stroke-width="1"/>
<rect x="535.5" y="452.5" width="21" height="21" fill="#c8c8c8" stroke="#5a5a5a" stroke-width="1"/>
<rect x="536.5" y="453.5" width="19" height="19" fill="none" stroke="#f4f4f4" stroke-width="1"/>
<circle cx="498.33" cy="465.50" r="2.6" fill="#000"/>
<circle cx="494.00" cy="468.00" r="2.6" fill="#000"/>
<circle cx="489.67" cy="465.50" r="2.6" fill="#000"/>
<circle cx="489.67" cy="460.50" r="2.6" fill="#000"/>
<circle cx="494.00" cy="458.00" r="2.6" fill="#000"/>
<circle cx="498.33" cy="460.50" r="2.6" fill="#000"/>
<circle cx="494" cy="463" r="4.5" fill="#000"/><circle cx="494" cy="463" r="1.6" fill="#c8c8c8"/>
<path d="M520.5 456.5 L528 471 L513 471 Z" fill="#000"/>
<path d="M546 469 L541.2 469 L541.2 458.4 L550.8 458.4 L550.8 462" fill="none" stroke="#000" stroke-width="2"/>
<path d="M549 471 L549 464" stroke="#000" stroke-width="2"/>
<path d="M545.8 465.5 L549 461.5 L552.2 465.5 Z" fill="#000"/>
<rect x="478" y="484" width="271.6" height="24" fill="#efefef"/>
<rect x="749.6" y="484" width="686" height="24" fill="#d9d9d9"/>
<line x1="532.4" y1="484" x2="532.4" y2="508" stroke="#d6d6d6" stroke-width="1"/>
<line x1="590.1" y1="484" x2="590.1" y2="508" stroke="#d6d6d6" stroke-width="1"/>
<line x1="675.7" y1="484" x2="675.7" y2="508" stroke="#d6d6d6" stroke-width="1"/>
<line x1="701.6" y1="484" x2="701.6" y2="508" stroke="#d6d6d6" stroke-width="1"/>
<line x1="725.4" y1="484" x2="725.4" y2="508" stroke="#d6d6d6" stroke-width="1"/>
<line x1="478" y1="508.5" x2="1436" y2="508.5" stroke="#d8d8d8" stroke-width="1"/>
<text x="505" y="501.5" text-anchor="middle" font-size="12" class="t">Run</text>
<text x="560.6" y="501.5" text-anchor="middle" font-size="12" class="t">DOF</text>
<text x="632.6" y="501.5" text-anchor="middle" font-size="12" class="t">Radius</text>
<text x="687.8" y="501.5" text-anchor="middle" font-size="12" class="t">X</text>
<text x="712.3" y="501.5" text-anchor="middle" font-size="12" class="t">Y</text>
<text x="736.5" y="501.5" text-anchor="middle" font-size="12" class="t">Z</text>
<text x="768" y="501.5" text-anchor="middle" font-size="12" class="t">K1</text>
<text x="807.7" y="501.5" text-anchor="middle" font-size="12" class="t">K2</text>
<text x="846.4" y="501.5" text-anchor="middle" font-size="12" class="t">K3</text>
<text x="915.8" y="501.5" text-anchor="middle" font-size="12" class="t">T-Stress</text>
<text x="1015.3" y="501.5" text-anchor="middle" font-size="12" class="t">Limit_K1</text>
<text x="1115.5" y="501.5" text-anchor="middle" font-size="12" class="t">Limit_K2</text>
<text x="1215.3" y="501.5" text-anchor="middle" font-size="12" class="t">Limit_K3</text>
<text x="1350.5" y="501.5" text-anchor="middle" font-size="12" class="t">Limit_T-Stress</text>
<line x1="480" y1="529.5" x2="1434" y2="529.5" stroke="#ececec" stroke-width="1"/>
<line x1="480" y1="550.5" x2="1434" y2="550.5" stroke="#ececec" stroke-width="1"/>
<line x1="480" y1="571.5" x2="1434" y2="571.5" stroke="#ececec" stroke-width="1"/>
<line x1="480" y1="592.5" x2="1434" y2="592.5" stroke="#ececec" stroke-width="1"/>
<line x1="480" y1="613.5" x2="1434" y2="613.5" stroke="#ececec" stroke-width="1"/>
<line x1="532.4" y1="509" x2="532.4" y2="614" stroke="#ececec" stroke-width="1"/>
<line x1="590.1" y1="509" x2="590.1" y2="614" stroke="#ececec" stroke-width="1"/>
<line x1="675.7" y1="509" x2="675.7" y2="614" stroke="#ececec" stroke-width="1"/>
<line x1="701.6" y1="509" x2="701.6" y2="614" stroke="#ececec" stroke-width="1"/>
<line x1="725.4" y1="509" x2="725.4" y2="614" stroke="#ececec" stroke-width="1"/>
<line x1="749.6" y1="509" x2="749.6" y2="614" stroke="#ececec" stroke-width="1"/>
<line x1="788.2" y1="509" x2="788.2" y2="614" stroke="#ececec" stroke-width="1"/>
<line x1="827.8" y1="509" x2="827.8" y2="614" stroke="#ececec" stroke-width="1"/>
<line x1="866.4" y1="509" x2="866.4" y2="614" stroke="#ececec" stroke-width="1"/>
<line x1="966.4" y1="509" x2="966.4" y2="614" stroke="#ececec" stroke-width="1"/>
<line x1="1066.7" y1="509" x2="1066.7" y2="614" stroke="#ececec" stroke-width="1"/>
<line x1="1166.6" y1="509" x2="1166.6" y2="614" stroke="#ececec" stroke-width="1"/>
<line x1="1266.6" y1="509" x2="1266.6" y2="614" stroke="#ececec" stroke-width="1"/>
<text x="512" y="524.8" text-anchor="middle" font-size="12.5" class="t">1</text>
<text x="564.6" y="524.8" text-anchor="middle" font-size="12.5" class="t">52863</text>
<text x="636.8" y="524.8" text-anchor="middle" font-size="12.5" class="t">1.519e-04</text>
<text x="688.6" y="524.8" text-anchor="middle" font-size="12.5" class="t">...</text>
<text x="714" y="524.8" text-anchor="middle" font-size="12.5" class="t">...</text>
<text x="738.7" y="524.8" text-anchor="middle" font-size="12.5" class="t">...</text>
<text x="772.3" y="524.8" text-anchor="middle" font-size="12.5" class="t">2....</text>
<text x="810.8" y="524.8" text-anchor="middle" font-size="12.5" class="t">4....</text>
<text x="848.6" y="524.8" text-anchor="middle" font-size="12.5" class="t">-5...</text>
<text x="918" y="524.8" text-anchor="middle" font-size="12.5" class="t">-3.299e+02</text>
<text x="1019.4" y="524.8" text-anchor="middle" font-size="12.5" class="t">2.283e+02</text>
<text x="1119.4" y="524.8" text-anchor="middle" font-size="12.5" class="t">4.365e+00</text>
<text x="1218.2" y="524.8" text-anchor="middle" font-size="12.5" class="t">-5.716e+00</text>
<text x="1352.1" y="524.8" text-anchor="middle" font-size="12.5" class="t">-1.140e+02</text>
<text x="512" y="545.8" text-anchor="middle" font-size="12.5" class="t">2</text>
<text x="564.6" y="545.8" text-anchor="middle" font-size="12.5" class="t">158541</text>
<text x="636.8" y="545.8" text-anchor="middle" font-size="12.5" class="t">1.519e-04</text>
<text x="688.6" y="545.8" text-anchor="middle" font-size="12.5" class="t">...</text>
<text x="714" y="545.8" text-anchor="middle" font-size="12.5" class="t">...</text>
<text x="738.7" y="545.8" text-anchor="middle" font-size="12.5" class="t">...</text>
<text x="772.3" y="545.8" text-anchor="middle" font-size="12.5" class="t">2....</text>
<text x="810.8" y="545.8" text-anchor="middle" font-size="12.5" class="t">4....</text>
<text x="848.6" y="545.8" text-anchor="middle" font-size="12.5" class="t">-5...</text>
<text x="918" y="545.8" text-anchor="middle" font-size="12.5" class="t">-1.608e+02</text>
<text x="1019.4" y="545.8" text-anchor="middle" font-size="12.5" class="t">2.283e+02</text>
<text x="1119.4" y="545.8" text-anchor="middle" font-size="12.5" class="t">4.365e+00</text>
<text x="1218.2" y="545.8" text-anchor="middle" font-size="12.5" class="t">-5.716e+00</text>
<text x="1352.1" y="545.8" text-anchor="middle" font-size="12.5" class="t">-1.140e+02</text>
<text x="512" y="566.8" text-anchor="middle" font-size="12.5" class="t">3</text>
<text x="564.6" y="566.8" text-anchor="middle" font-size="12.5" class="t">362001</text>
<text x="636.8" y="566.8" text-anchor="middle" font-size="12.5" class="t">1.519e-04</text>
<text x="688.6" y="566.8" text-anchor="middle" font-size="12.5" class="t">...</text>
<text x="714" y="566.8" text-anchor="middle" font-size="12.5" class="t">...</text>
<text x="738.7" y="566.8" text-anchor="middle" font-size="12.5" class="t">...</text>
<text x="772.3" y="566.8" text-anchor="middle" font-size="12.5" class="t">2....</text>
<text x="810.8" y="566.8" text-anchor="middle" font-size="12.5" class="t">4....</text>
<text x="848.6" y="566.8" text-anchor="middle" font-size="12.5" class="t">-5...</text>
<text x="918" y="566.8" text-anchor="middle" font-size="12.5" class="t">-1.213e+02</text>
<text x="1019.4" y="566.8" text-anchor="middle" font-size="12.5" class="t">2.283e+02</text>
<text x="1119.4" y="566.8" text-anchor="middle" font-size="12.5" class="t">4.365e+00</text>
<text x="1218.2" y="566.8" text-anchor="middle" font-size="12.5" class="t">-5.716e+00</text>
<text x="1352.1" y="566.8" text-anchor="middle" font-size="12.5" class="t">-1.140e+02</text>
<text x="512" y="587.8" text-anchor="middle" font-size="12.5" class="t">4</text>
<text x="564.6" y="587.8" text-anchor="middle" font-size="12.5" class="t">693162</text>
<text x="636.8" y="587.8" text-anchor="middle" font-size="12.5" class="t">1.519e-04</text>
<text x="688.6" y="587.8" text-anchor="middle" font-size="12.5" class="t">...</text>
<text x="714" y="587.8" text-anchor="middle" font-size="12.5" class="t">...</text>
<text x="738.7" y="587.8" text-anchor="middle" font-size="12.5" class="t">...</text>
<text x="772.3" y="587.8" text-anchor="middle" font-size="12.5" class="t">2....</text>
<text x="810.8" y="587.8" text-anchor="middle" font-size="12.5" class="t">4....</text>
<text x="848.6" y="587.8" text-anchor="middle" font-size="12.5" class="t">-5...</text>
<text x="918" y="587.8" text-anchor="middle" font-size="12.5" class="t">-1.157e+02</text>
<text x="1019.4" y="587.8" text-anchor="middle" font-size="12.5" class="t">2.283e+02</text>
<text x="1119.4" y="587.8" text-anchor="middle" font-size="12.5" class="t">4.365e+00</text>
<text x="1218.2" y="587.8" text-anchor="middle" font-size="12.5" class="t">-5.716e+00</text>
<text x="1352.1" y="587.8" text-anchor="middle" font-size="12.5" class="t">-1.140e+02</text>
</svg>
</body></html>
